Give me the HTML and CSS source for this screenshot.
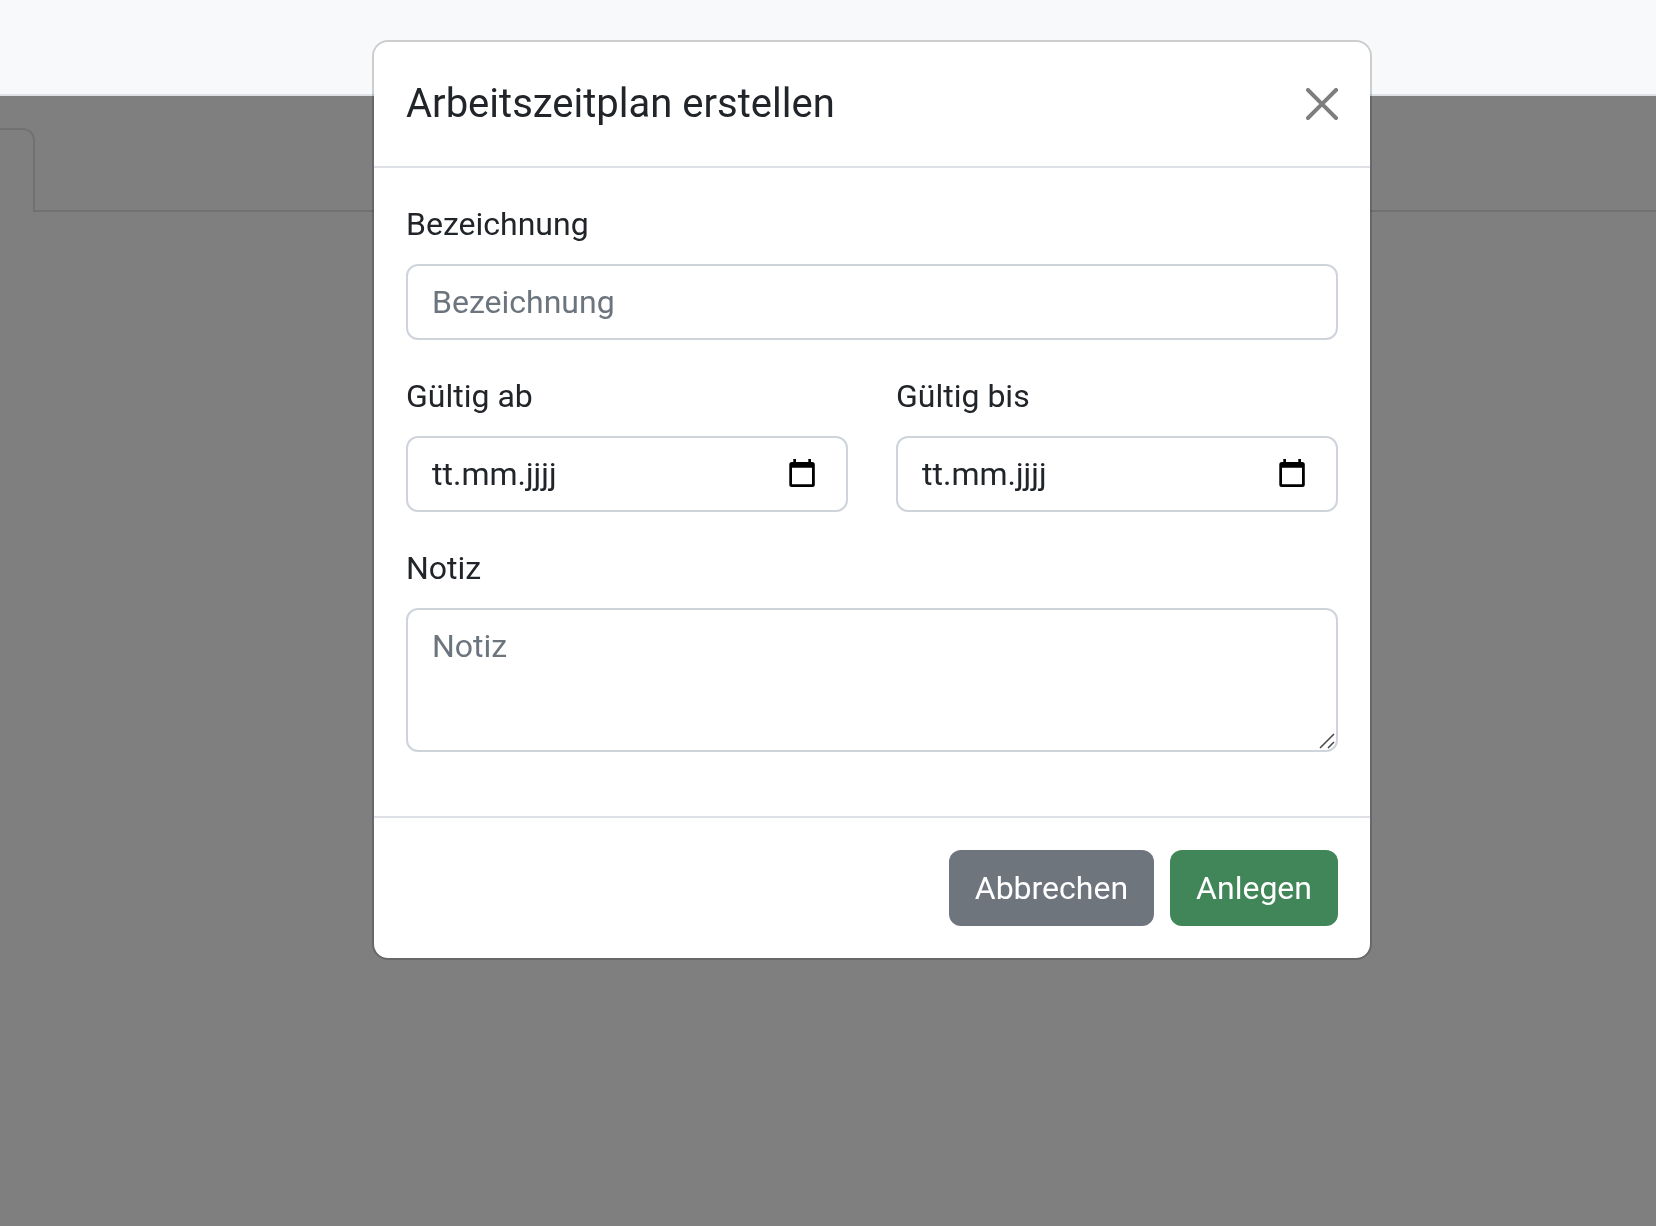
FILE: index.html
```html
<!DOCTYPE html>
<html lang="de">
<head>
<meta charset="utf-8">
<meta name="viewport" content="width=device-width, initial-scale=1">
<title>Arbeitszeitplan erstellen</title>
<link rel="stylesheet" href="styles.css">
</head>
<body>
<header class="navbar"></header>
<main class="page">
  <div class="tabs">
    <div class="tab"></div>
    <div class="tabs-rest"></div>
  </div>
</main>
<div class="backdrop"></div>
<div class="modal" role="dialog" aria-modal="true" aria-labelledby="modal-title">
  <form class="modal-content">
    <div class="modal-header">
      <h1 class="modal-title" id="modal-title">Arbeitszeitplan erstellen</h1>
      <button class="close" type="button" aria-label="Schließen">
        <svg viewBox="0 0 16 16" width="32" height="32" aria-hidden="true"><path d="M.293.293a1 1 0 0 1 1.414 0L8 6.586 14.293.293a1 1 0 1 1 1.414 1.414L9.414 8l6.293 6.293a1 1 0 0 1-1.414 1.414L8 9.414l-6.293 6.293a1 1 0 0 1-1.414-1.414L6.586 8 .293 1.707a1 1 0 0 1 0-1.414z"/></svg>
      </button>
    </div>
    <div class="modal-body">
      <div class="field">
        <label for="name">Bezeichnung</label>
        <input class="control" id="name" type="text" placeholder="Bezeichnung">
      </div>
      <div class="row">
        <div class="field">
          <label for="from">Gültig ab</label>
          <div class="control date">
            <input class="date-input" id="from" type="text" placeholder="tt.mm.jjjj">
            <button class="picker" type="button" aria-label="Kalender öffnen">
              <svg viewBox="0 0 32 32" width="32" height="32" aria-hidden="true"><path fill-rule="evenodd" d="M7.300 1h2.700v3h12.300V1h2.700v3h1.300q2.500 0 2.500 2.500v20q0 2.500-2.500 2.500H5.800Q3.300 29 3.300 26.500v-20Q3.300 4 5.800 4H7.300zM6 9.700v16.600h20V9.700z"/></svg>
            </button>
          </div>
        </div>
        <div class="field">
          <label for="until">Gültig bis</label>
          <div class="control date">
            <input class="date-input" id="until" type="text" placeholder="tt.mm.jjjj">
            <button class="picker" type="button" aria-label="Kalender öffnen">
              <svg viewBox="0 0 32 32" width="32" height="32" aria-hidden="true"><path fill-rule="evenodd" d="M7.300 1h2.700v3h12.300V1h2.700v3h1.300q2.500 0 2.500 2.500v20q0 2.500-2.500 2.500H5.800Q3.300 29 3.300 26.500v-20Q3.300 4 5.800 4H7.300zM6 9.700v16.600h20V9.700z"/></svg>
            </button>
          </div>
        </div>
      </div>
      <div class="field">
        <label for="note">Notiz</label>
        <div class="note">
          <textarea class="control" id="note" placeholder="Notiz"></textarea>
          <svg class="grip" viewBox="0 0 16 16" width="16" height="16" aria-hidden="true"><path d="M1 15 15 1M9 15l6-6"/></svg>
        </div>
      </div>
    </div>
    <div class="modal-footer">
      <button class="btn btn-secondary" type="button">Abbrechen</button>
      <button class="btn btn-success" type="submit">Anlegen</button>
    </div>
  </form>
</div>
</body>
</html>
```
FILE: styles.css
```css
*, *::before, *::after {
  box-sizing: border-box;
}

body {
  margin: 0;
  min-height: 100vh;
  background: #fff;
  color: #212529;
  font: 400 32px/48px Roboto, "Liberation Sans", sans-serif;
}

input, textarea, button {
  margin: 0;
  color: inherit;
  font: inherit;
}

.navbar {
  position: relative;
  z-index: 2;
  height: 96px;
  background: #f8f9fb;
  border-bottom: 2px solid #dee2e6;
}

.page {
  padding-top: 32px;
}

.tabs {
  display: flex;
  height: 84px;
}

.tab {
  width: 35px;
  border: solid #dee2e6;
  border-width: 2px 2px 0 0;
  border-top-right-radius: 12px;
}

.tabs-rest {
  flex: 1;
  border-bottom: 2px solid #dee2e6;
}

.backdrop {
  position: fixed;
  inset: 0;
  z-index: 1;
  background: rgba(0, 0, 0, .5);
}

.modal {
  position: fixed;
  inset: 0;
  z-index: 3;
  overflow: auto;
  padding: 40px 0 40px 88px;
}

.modal-content {
  max-width: 1000px;
  margin: 0 auto;
  background: #fff;
  background-clip: padding-box;
  border: 2px solid rgba(0, 0, 0, .175);
  border-radius: 16px;
}

.modal-header {
  display: flex;
  align-items: center;
  justify-content: space-between;
  padding: 32px;
  border-bottom: 2px solid #dee2e6;
}

.modal-title {
  margin: 0;
  font-size: 40px;
  font-weight: 400;
  line-height: 60px;
}

.close {
  display: flex;
  padding: 0;
  border: 0;
  background: none;
  opacity: .5;
  color: #000;
  cursor: pointer;
}

.modal-body {
  display: flex;
  flex-direction: column;
  gap: 32px;
  padding: 32px 32px 64px;
}

.row {
  display: grid;
  grid-template-columns: 1fr 1fr;
  gap: 48px;
}

.field {
  display: flex;
  flex-direction: column;
  gap: 16px;
  min-width: 0;
}

.control {
  display: block;
  width: 100%;
  height: 76px;
  padding: 12px 24px;
  background: #fff;
  border: 2px solid #ced4da;
  border-radius: 12px;
}

.control::placeholder {
  color: #6c757d;
  opacity: 1;
}

.date {
  display: flex;
  align-items: center;
}

.date-input {
  flex: 1;
  min-width: 0;
  padding: 0;
  border: 0;
  background: none;
}

.date-input::placeholder {
  color: #212529;
  opacity: 1;
}

.picker {
  display: flex;
  padding: 0 4px;
  border: 0;
  background: none;
  color: #000;
  cursor: pointer;
}

.note {
  position: relative;
}

textarea.control {
  height: 144px;
  resize: none;
}

.grip {
  position: absolute;
  right: 3px;
  bottom: 3px;
  fill: none;
  stroke: #444;
  stroke-width: 1.5;
  pointer-events: none;
}

.modal-footer {
  display: flex;
  justify-content: flex-end;
  gap: 16px;
  padding: 32px;
  border-top: 2px solid #dee2e6;
}

.btn {
  padding: 14px 26px;
  border: 0;
  border-radius: 12px;
  color: #fff;
  cursor: pointer;
}

.btn-secondary {
  background: #6e757d;
}

.btn-success {
  background: #418658;
}
```
